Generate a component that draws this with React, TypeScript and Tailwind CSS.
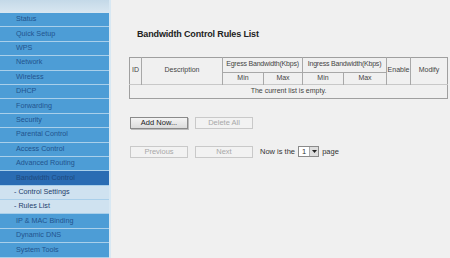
import React from 'react';

const menu: { label: string; kind: 'main' | 'active' | 'sub' }[] = [
  { label: 'Status', kind: 'main' },
  { label: 'Quick Setup', kind: 'main' },
  { label: 'WPS', kind: 'main' },
  { label: 'Network', kind: 'main' },
  { label: 'Wireless', kind: 'main' },
  { label: 'DHCP', kind: 'main' },
  { label: 'Forwarding', kind: 'main' },
  { label: 'Security', kind: 'main' },
  { label: 'Parental Control', kind: 'main' },
  { label: 'Access Control', kind: 'main' },
  { label: 'Advanced Routing', kind: 'main' },
  { label: 'Bandwidth Control', kind: 'active' },
  { label: '- Control Settings', kind: 'sub' },
  { label: '- Rules List', kind: 'sub' },
  { label: 'IP & MAC Binding', kind: 'main' },
  { label: 'Dynamic DNS', kind: 'main' },
  { label: 'System Tools', kind: 'main' },
];

const itemClass = {
  main: 'bg-[#4d9dd6] text-[#22548e] pl-[16px]',
  active: 'bg-[#2a6cb3] text-[#1d4a80] pl-[16px]',
  sub: 'bg-[#cfe2f0] text-[#23406a] pl-[14px]',
};

const Btn: React.FC<{ label: string; disabled?: boolean }> = ({ label, disabled }) => (
  <button
    className={
      'w-[58px] h-[12px] flex items-center justify-center text-[7.5px] leading-none border ' +
      (disabled
        ? 'border-[#c9c9c9] bg-[#f2f2f2] text-[#a8a8a8]'
        : 'border-[#8a8a8a] bg-gradient-to-b from-[#f4f4f4] to-[#dcdcdc] text-[#222] shadow-[1px_1px_0_#bcbcbc]')
    }
  >
    {label}
  </button>
);

const App: React.FC = () => {
  return (
    <div className="w-[450px] h-[258px] flex overflow-hidden bg-[#f0f0f0] font-['Liberation_Sans',Arial,sans-serif]">
      <div className="w-[111px] flex-shrink-0 flex flex-col bg-[#d6e6f1] border-r-[2px] border-[#d8e8f3]">
        <div className="h-[13px] bg-gradient-to-b from-[#c4d9e8] to-[#d9e7f1]" />
        {menu.map((m) => (
          <div
            key={m.label}
            className={'h-[14.4px] flex items-center text-[7.2px] border-b border-[#a9cfea] ' + itemClass[m.kind]}
          >
            {m.label}
          </div>
        ))}
      </div>

      <div className="flex-1 pl-[18px] pr-[2px]">
        <h1 className="mt-[28px] ml-[8px] text-[9px] tracking-[-0.15px] font-bold text-[#222]">Bandwidth Control Rules List</h1>

        <table className="mt-[15px] border-collapse border border-[#9f9f9f] text-[7px] text-[#444] text-center w-[319px]">
          <tbody>
            <tr className="h-[15px]">
              <td rowSpan={2} className="w-[12px] border-r border-[#a8a8a8]">ID</td>
              <td rowSpan={2} className="w-[81px]">Description</td>
              <td colSpan={2} className="border-l border-r border-b border-[#a8a8a8] tracking-[-0.2px]">Egress Bandwidth(Kbps)</td>
              <td colSpan={2} className="border-r border-b border-[#a8a8a8] tracking-[-0.2px]">Ingress Bandwidth(Kbps)</td>
              <td rowSpan={2} className="w-[24px] border-r border-[#a8a8a8]">Enable</td>
              <td rowSpan={2} className="w-[37px]">Modify</td>
            </tr>
            <tr className="h-[12px]">
              <td className="w-[41px] border-l border-r border-[#a8a8a8]">Min</td>
              <td className="w-[39px] border-r border-[#a8a8a8]">Max</td>
              <td className="w-[41px] border-r border-[#a8a8a8]">Min</td>
              <td className="w-[43px] border-r border-[#a8a8a8]">Max</td>
            </tr>
            <tr className="h-[14px] border-t border-[#c8c8c8]">
              <td colSpan={8}>The current list is empty.</td>
            </tr>
          </tbody>
        </table>

        <div className="mt-[18px] ml-[1px] flex gap-[7px]">
          <Btn label="Add Now..." />
          <Btn label="Delete All" disabled />
        </div>

        <div className="mt-[17px] ml-[1px] flex items-center gap-[7px] text-[7.5px] text-[#333]">
          <Btn label="Previous" disabled />
          <Btn label="Next" disabled />
          <div className="flex items-center gap-[3px]">
            <span>Now is the</span>
            <span className="flex items-center h-[11px] border border-[#8a8a8a] bg-white">
              <span className="px-[3px] text-[7.5px]">1</span>
              <span className="w-[9px] h-[9px] bg-[#dedede] border-l border-[#aaa] flex items-center justify-center">
                <svg width="5" height="3" viewBox="0 0 5 3"><path d="M0 0h5L2.5 3z" fill="#222" /></svg>
              </span>
            </span>
            <span>page</span>
          </div>
        </div>
      </div>
    </div>
  );
};

export default App;
